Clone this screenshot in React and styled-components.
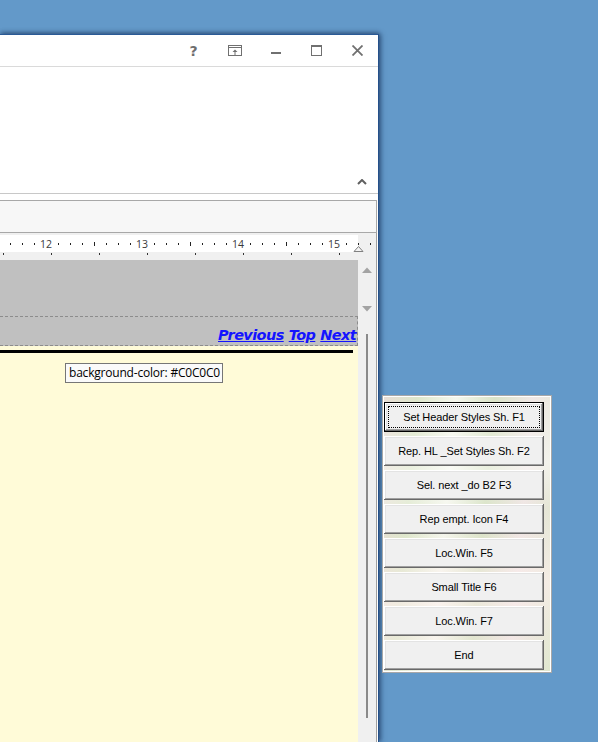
import React from "react";
import styled, { createGlobalStyle } from "styled-components";

const Global = createGlobalStyle`
  html, body { margin: 0; padding: 0; }
  body {
    background: #6399c9;
    height: 742px;
    overflow: hidden;
    font-family: "Liberation Sans", Arial, sans-serif;
  }
  #root { height: 100%; }
`;

const Desktop = styled.div`
  position: relative;
  height: 742px;
  padding-top: 34px;
  box-sizing: border-box;
`;

const Window = styled.div`
  width: 379px;
  height: 708px;
  box-sizing: border-box;
  background: #ffffff;
  border-top: 1px solid #2a5a96;
  border-right: 1px solid #24508a;
  box-shadow: 2px 0 5px rgba(10, 30, 70, 0.5), 0 -2px 4px rgba(10, 30, 70, 0.3);
  display: flex;
  flex-direction: column;
  overflow: hidden;
`;

const TitleBar = styled.div`
  height: 31px;
  flex: none;
  display: flex;
  justify-content: flex-end;
  align-items: center;
  border-bottom: 1px solid #dadada;
`;

const TitleButton = styled.div`
  width: 41px;
  height: 31px;
  display: flex;
  align-items: center;
  justify-content: center;
  color: #6e6e6e;
  font-family: "DejaVu Sans", sans-serif;
  font-weight: bold;
  font-size: 14px;
`;

const Ribbon = styled.div`
  height: 127px;
  flex: none;
  border-bottom: 1px solid #c8c8c8;
  margin-bottom: 6px;
  display: flex;
  justify-content: flex-end;
  align-items: flex-end;
  padding: 0 11px 8px 0;
  box-sizing: border-box;
`;

const ToolBox = styled.div`
  height: 33px;
  flex: none;
  box-sizing: border-box;
  background: #f7f7f7;
  border-top: 1px solid #a8a8a8;
  border-bottom: 1px solid #a8a8a8;
  border-right: 1px solid #a8a8a8;
  margin-right: 1px;
`;

const Pane = styled.div`
  flex: 1;
  min-height: 0;
  background: #f0f0f0;
  border-right: 1px solid #a0a0a0;
  margin-right: 1px;
  display: flex;
  flex-direction: column;
`;

const RulerSvg = styled.svg`
  display: block;
  flex: none;
`;

const Body = styled.div`
  flex: 1;
  min-height: 0;
  display: flex;
`;

const Content = styled.div`
  width: 358px;
  flex: none;
  display: flex;
  flex-direction: column;
  background: #fffbd8;
`;

const GrayBlock = styled.div`
  height: 56px;
  flex: none;
  background: #c0c0c0;
`;

const NavBar = styled.div`
  height: 28px;
  flex: none;
  background: #c0c0c0;
  border-top: 1px dashed #8c8c8c;
  border-bottom: 1px dashed #8c8c8c;
  border-right: 1px dashed #8c8c8c;
  overflow: hidden;
  white-space: nowrap;
  padding-left: 218px;
  box-sizing: content-box;
  display: flex;
  align-items: center;
  gap: 5px;
`;

const NavLink = styled.a`
  font-family: "DejaVu Sans", Verdana, sans-serif;
  font-weight: bold;
  font-style: italic;
  font-size: 14.5px;
  letter-spacing: -0.6px;
  color: #1414ff;
  text-decoration: underline;
  flex: none;
  margin-top: 7px;
`;

const Rule = styled.div`
  height: 3px;
  width: 353px;
  background: #000;
  margin-top: 4px;
  flex: none;
`;

const Tooltip = styled.div`
  align-self: flex-start;
  margin: 10px 0 0 65px;
  height: 18px;
  line-height: 18px;
  padding: 0 2px 0 3px;
  border: 1px solid #767676;
  background: #fafafa;
  color: #000;
  font-family: "Open Sans", "Liberation Sans", sans-serif;
  font-size: 12px;
  letter-spacing: -0.2px;
  white-space: nowrap;
`;

const Scrollbar = styled.div`
  flex: 1;
  background: #f0f0f0;
  display: flex;
  flex-direction: column;
  align-items: center;
`;

const ArrowBox = styled.div`
  height: 18px;
  display: flex;
  align-items: center;
  justify-content: center;
  margin-top: ${(p) => p.$top || 0}px;
`;

const Thumb = styled.div`
  width: 2px;
  height: 384px;
  margin-top: ${(p) => p.$top}px;
  background: #8a8a8a;
`;

const Panel = styled.div`
  position: absolute;
  left: 382px;
  top: 395px;
  width: 170px;
  height: 278px;
  box-sizing: border-box;
  border: 1px solid #a8a8a8;
  box-shadow: inset 1px 1px 0 #ffffff, inset -1px -1px 0 #ffffff;
  background:
    linear-gradient(172deg, rgba(255,255,255,0) 0%, rgba(255,255,255,0.5) 30%, rgba(255,255,255,0) 45%, rgba(255,240,240,0.6) 70%, rgba(255,255,255,0) 100%),
    linear-gradient(95deg, #e9ddd6 0%, #dce6c9 18%, #f4f6ec 38%, #d6e1c2 58%, #eee4e2 78%, #dfe7cd 100%);
  padding: 6px 0 0 1px;
  display: flex;
  flex-direction: column;
  gap: 4px;
`;

const Btn = styled.button`
  width: 160px;
  height: 30px;
  flex: none;
  margin: 0;
  padding: 0;
  background: #f0f0f0;
  border: ${(p) => (p.$default ? "1px solid #000" : "0")};
  box-shadow: inset -1px -1px 0 #696969, inset 1px 1px 0 #ffffff,
    inset -2px -2px 0 #a0a0a0, inset 2px 2px 0 #e3e3e3;
  font-family: "Liberation Sans", Arial, sans-serif;
  font-size: 11px;
  letter-spacing: -0.1px;
  color: #000;
  position: relative;
  display: flex;
  align-items: center;
  justify-content: center;
`;

const Focus = styled.span`
  position: absolute;
  inset: 3px;
  border: 1px dotted #000;
  pointer-events: none;
`;

function Ruler() {
  const W = 377;
  const dots = [];
  for (let k = 0; 10 + 12 * k <= 372; k++) {
    const x = 10 + 12 * k;
    const m = ((x - 46) % 96 + 96) % 96;
    if (m === 0) continue;
    if (m === 48) {
      dots.push(<rect key={"d" + k} x={x} y={9} width={1} height={4} fill="#222" />);
    } else {
      dots.push(<rect key={"d" + k} x={x} y={10} width={1} height={2} fill="#222" />);
    }
  }
  const tabs = [];
  for (let k = 0; 3 + 48 * k < 358; k++) {
    tabs.push(<rect key={"t" + k} x={3 + 48 * k} y={20} width={1} height={2} fill="#333" />);
  }
  const nums = ["12", "13", "14", "15"].map((n, i) => (
    <text
      key={n}
      x={46 + 96 * i}
      y={15}
      textAnchor="middle"
      fontFamily="'Open Sans', 'DejaVu Sans', sans-serif"
      fontSize="10.5"
      fill="#3a3a3a"
    >
      {n}
    </text>
  ));
  return (
    <RulerSvg width={W} height={27} viewBox={`0 0 ${W} 27`}>
      <rect x={0} y={2} width={358} height={17} fill="#ffffff" />
      {dots}
      {tabs}
      {nums}
      <path d="M358.5 13.5 L363 18.5 L354 18.5 Z" fill="#f4f4f4" stroke="#808080" strokeWidth="1" />
    </RulerSvg>
  );
}

const stroke = "#707070";

function PinIcon() {
  return (
    <svg width="14" height="11" viewBox="0 0 14 11">
      <rect x="0.5" y="0.5" width="13" height="10" fill="none" stroke={stroke} />
      <line x1="0.5" y1="2.5" x2="13.5" y2="2.5" stroke={stroke} />
      <path d="M7 4.5 L9.5 7 L4.5 7 Z" fill={stroke} />
      <line x1="7" y1="6.5" x2="7" y2="10" stroke={stroke} />
    </svg>
  );
}

function MinIcon() {
  return (
    <svg width="10" height="11" viewBox="0 0 10 11">
      <rect x="0" y="7" width="10" height="2" fill={stroke} />
    </svg>
  );
}

function MaxIcon() {
  return (
    <svg width="11" height="11" viewBox="0 0 11 11">
      <rect x="0.5" y="0.5" width="10" height="10" fill="none" stroke={stroke} />
      <rect x="0" y="0" width="11" height="2" fill={stroke} />
    </svg>
  );
}

function CloseIcon() {
  return (
    <svg width="11" height="11" viewBox="0 0 11 11">
      <path d="M0.5 0.5 L10.5 10.5 M10.5 0.5 L0.5 10.5" stroke={stroke} strokeWidth="1.8" />
    </svg>
  );
}

function Chevron() {
  return (
    <svg width="10" height="6" viewBox="0 0 10 6">
      <path d="M1 5 L5 1 L9 5" fill="none" stroke="#606060" strokeWidth="2" />
    </svg>
  );
}

function Arrow({ up }) {
  return (
    <svg width="10" height="6" viewBox="0 0 10 6">
      <path d={up ? "M0 6 L5 0.5 L10 6 Z" : "M0 0 L10 0 L5 5.5 Z"} fill="#a3a3a3" />
    </svg>
  );
}

const buttons = [
  "Set Header Styles Sh. F1",
  "Rep. HL _Set Styles Sh. F2",
  "Sel. next _do B2 F3",
  "Rep empt. Icon F4",
  "Loc.Win. F5",
  "Small Title F6",
  "Loc.Win. F7",
  "End",
];

export default function App() {
  return (
    <>
      <Global />
      <Desktop>
        <Window>
          <TitleBar>
            <TitleButton>?</TitleButton>
            <TitleButton><PinIcon /></TitleButton>
            <TitleButton><MinIcon /></TitleButton>
            <TitleButton><MaxIcon /></TitleButton>
            <TitleButton><CloseIcon /></TitleButton>
          </TitleBar>
          <Ribbon>
            <Chevron />
          </Ribbon>
          <ToolBox />
          <Pane>
            <Ruler />
            <Body>
              <Content>
                <GrayBlock />
                <NavBar>
                  <NavLink>Previous</NavLink>
                  <NavLink>Top</NavLink>
                  <NavLink>Next</NavLink>
                </NavBar>
                <Rule />
                <Tooltip>background-color: #C0C0C0</Tooltip>
              </Content>
              <Scrollbar>
                <ArrowBox $top={1}><Arrow up /></ArrowBox>
                <ArrowBox $top={21}><Arrow /></ArrowBox>
                <Thumb $top={16} />
              </Scrollbar>
            </Body>
          </Pane>
        </Window>
        <Panel>
          {buttons.map((b, i) => (
            <Btn key={b} $default={i === 0}>
              {b}
              {i === 0 && <Focus />}
            </Btn>
          ))}
        </Panel>
      </Desktop>
    </>
  );
}
